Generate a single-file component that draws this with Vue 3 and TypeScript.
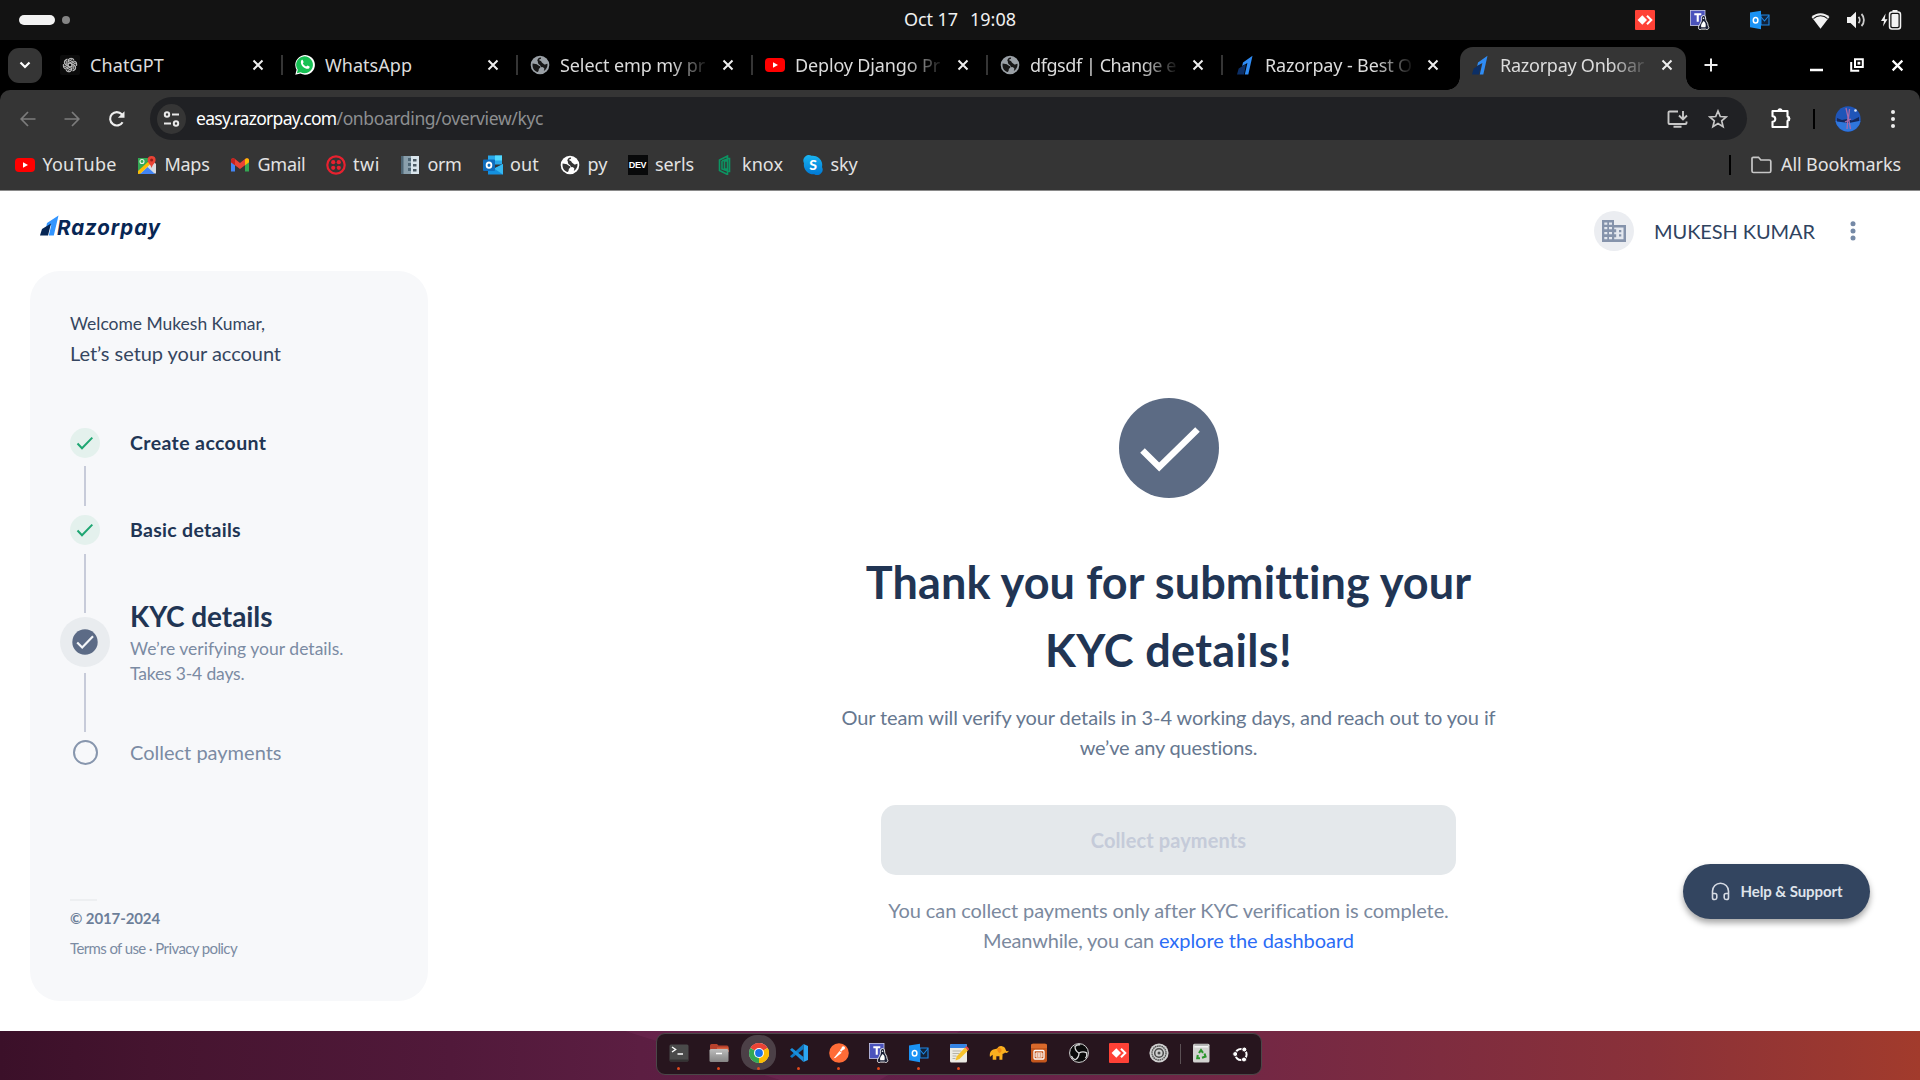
<script setup lang="ts">
interface Tab { title: string; icon: string; width: number; fade?: boolean; active?: boolean }
interface Bookmark { label: string; icon: string; width: number; gap: number; mark?: string }

// Spreads a label's letters so that it takes exactly the given width.
const vFit = {
  mounted(el: HTMLElement, binding: { value: number }) {
    const natural = el.getBoundingClientRect().width
    const count = (el.textContent ?? '').trim().length
    if (count > 0) el.style.letterSpacing = `${((binding.value - natural) / count).toFixed(3)}px`
  },
}

const tabs: Tab[] = [
  { title: 'ChatGPT', icon: 'gpt', width: 74 },
  { title: 'WhatsApp', icon: 'whatsapp', width: 87 },
  { title: 'Select emp my pr', icon: 'globe-grey', width: 145, fade: true },
  { title: 'Deploy Django Pr', icon: 'youtube', width: 145, fade: true },
  { title: 'dfgsdf | Change e', icon: 'globe-grey', width: 146, fade: true },
  { title: 'Razorpay - Best O', icon: 'razor', width: 147, fade: true },
  { title: 'Razorpay Onboar', icon: 'razor', width: 144, fade: true, active: true },
]

const bookmarks: Bookmark[] = [
  { label: 'YouTube', icon: 'youtube', width: 74, gap: 20.5 },
  { label: 'Maps', icon: 'maps', width: 45, gap: 20.5 },
  { label: 'Gmail', icon: 'gmail', width: 48, gap: 20 },
  { label: 'twi', icon: 'twilio', width: 27, gap: 20 },
  { label: 'orm', icon: 'orm', width: 34, gap: 21 },
  { label: 'out', icon: 'outlook-web', width: 29, gap: 21 },
  { label: 'py', icon: 'globe-white', width: 20, gap: 20 },
  { label: 'serls', icon: 'dev', width: 39, gap: 20.5, mark: 'DEV' },
  { label: 'knox', icon: 'knox', width: 41, gap: 20, mark: '' },
  { label: 'sky', icon: 'skype', width: 27, gap: 0, mark: 'S' },
]

const dock = [
  { icon: 'terminal', open: true },
  { icon: 'files', open: true },
  { icon: 'chrome', open: true, focused: true },
  { icon: 'vscode', open: true },
  { icon: 'postman', open: true },
  { icon: 'teams', open: true },
  { icon: 'outlook', open: true },
  { icon: 'notes', open: true },
  { icon: 'elephant' },
  { icon: 'impress' },
  { icon: 'obs' },
  { icon: 'anydesk' },
  { icon: 'settings' },
] as { icon: string; open?: boolean; focused?: boolean }[]
</script>

<template>
  <div class="desktop">
    <svg class="defs" width="0" height="0">
      <linearGradient id="g-skype" x1="0" y1="0" x2="0" y2="1"><stop offset="0" stop-color="#19b5f1" /><stop offset="1" stop-color="#0078d4" /></linearGradient>
      <linearGradient id="g-file" x1="0" y1="0" x2="0" y2="1"><stop offset="0" stop-color="#bdbdbd" /><stop offset="1" stop-color="#858585" /></linearGradient>
      <symbol id="i-gpt" viewBox="0 0 20 20">
        <rect width="20" height="20" rx="2" fill="#0b0b0b" />
        <g fill="none" stroke="#bdbdbd" stroke-width="1.1">
          <path v-for="n in 6" :key="n" d="M10 12.300L8 11V6.400A3 3 0 0 1 12.600 3.800L14 4.800M8 6.800l4-2.300" :transform="`rotate(${n * 60} 10 10)`" />
        </g>
      </symbol>
      <symbol id="i-whatsapp" viewBox="0 0 20 20">
        <path d="M0.3 19.8l1.3-5A9.8 9.8 0 1 1 5.4 18.5z" fill="#fff" />
        <path d="M1.9 18.2l.9-3.4A8.4 8.4 0 1 1 5.6 17.2z" fill="#16c053" />
        <path d="M6.6 5.1c.4-.4 1-.4 1.2.1l.8 1.8c.1.4-.8 1.3-.7 1.6.7 1.4 1.8 2.3 3.2 2.9.4.1 1.1-1.2 1.5-1l1.9.9c.4.3 0 1.6-.6 2-1.500.9-3.800.2-5.700-1.400C6.300 10.400 5 7.100 6.600 5.100z" fill="#fff" />
      </symbol>
      <symbol id="i-globe-grey" viewBox="0 0 20 20"><circle cx="10" cy="10" r="9.300" fill="#9aa0a6" /><path d="M2.600 8.500c2 .2 4.200.4 5.200 1.600.9 1.100 2.500.6 2.600 2 .1 1.200-1.800 1.400-1.700 2.700.1 1.200-.5 2.300-1.300 2.300C4 16 2 12.500 2.600 8.500zM10.500 2.400c1.300.2.400 1.600-.8 1.900-.9.200-.5 1.500.5 1.500 1.300 0 1 1.600 2.200 2.100 1.300.5 1.500 1.800 2.900 1.600 1-.1 1.700-1 2.200-.5.200 3-1.200 5.600-3.700 7 .5-1.600.9-2.600-.1-3.200-1.300-.7-2.800-.2-3.200-1.700-.3-1.300-1.700-1.600-2.300-2.600-.5-.9 0-2.400-1-3C8 3.500 9 2.300 10.500 2.400z" fill="#171717" /></symbol>
      <symbol id="i-globe-white" viewBox="0 0 20 20"><circle cx="10" cy="10" r="9.300" fill="#fff" /><path d="M2.600 8.500c2 .2 4.200.4 5.200 1.600.9 1.100 2.500.6 2.600 2 .1 1.200-1.800 1.400-1.700 2.700.1 1.200-.5 2.300-1.300 2.300C4 16 2 12.500 2.600 8.500zM10.500 2.400c1.300.2.400 1.600-.8 1.900-.9.200-.5 1.500.5 1.500 1.300 0 1 1.600 2.200 2.100 1.300.5 1.500 1.800 2.900 1.600 1-.1 1.700-1 2.200-.5.200 3-1.200 5.600-3.700 7 .5-1.600.9-2.600-.1-3.200-1.300-.7-2.800-.2-3.200-1.700-.3-1.300-1.700-1.600-2.300-2.600-.5-.9 0-2.400-1-3C8 3.500 9 2.300 10.500 2.400z" fill="#353535" /></symbol>
      <symbol id="i-youtube" viewBox="0 0 20 20"><rect y="3" width="20" height="14" rx="4" fill="#f00" /><path d="M8 7.200v5.600l5-2.800z" fill="#fff" /></symbol>
      <symbol id="i-razor" viewBox="0 0 20 20"><path d="M8 7.500L17.500.8 13.300 19.500H9.800l2.600-11.500L7.200 11z" fill="#2f8cf5" /><path d="M2 19.500l1.700-6L11 9 9 19.500z" fill="#0c2f66" /></symbol>
      <symbol id="i-maps" viewBox="0 0 20 20">
        <path d="M1 3h11l-3 9-8 7z" fill="#34a853" /><path d="M1 18.500L15 5l4 4v9.500z" fill="#dadce0" /><path d="M3 19l7.500-7L18 19z" fill="#4285f4" /><path d="M1 16l12-11 2 2.500L3.500 18.500 1 19z" fill="#fbbc04" /><circle cx="5" cy="6.500" r="2" fill="none" stroke="#e8f5e9" stroke-width="1.100" />
        <path d="M14.600 1a4 4 0 0 1 4 4c0 3-3 4.200-4 8-1-3.800-4-5-4-8a4 4 0 0 1 4-4z" fill="#ea4335" /><circle cx="14.600" cy="5" r="1.500" fill="#961d17" />
      </symbol>
      <symbol id="i-gmail" viewBox="0 0 20 20"><path d="M1 5v11.500h4V9z" fill="#4285f4" /><path d="M19 5v11.500h-4V9z" fill="#34a853" /><path d="M1 5.500C1 3 3.500 2.500 5 4l5 4 5-4c1.500-1.500 4-1 4 1.500v1.700l-9 6.800-9-6.800z" fill="#ea4335" /><path d="M15 4.300c1.500-1.700 4-1.300 4 1.200v1.700l-4 3z" fill="#fbbc04" /><path d="M1 5.500C1 3.200 3.300 2.600 5 4v6.200L1 7.200z" fill="#c5221f" /></symbol>
      <symbol id="i-twilio" viewBox="0 0 20 20"><circle cx="10" cy="10" r="8.700" fill="none" stroke="#e8212f" stroke-width="2.200" /><g fill="#e8212f"><circle cx="7.200" cy="7.200" r="2.100" /><circle cx="12.800" cy="7.200" r="2.100" /><circle cx="7.200" cy="12.800" r="2.100" /><circle cx="12.800" cy="12.800" r="2.100" /></g></symbol>
      <symbol id="i-orm" viewBox="0 0 20 20"><rect x="1" y="1" width="10" height="18" fill="#8aa0ad" /><path d="M1 1h2.500v18H1zM8 3h3v3H8zM8 8h3v3H8zM8 13h3v3H8z" fill="#4e6675" /><rect x="11" y="1" width="8" height="18" fill="#d9e5ec" /><path d="M13 4h3.500v2.500H13zM13 9h3.500v2.500H13zM13 14h3.500v2.500H13z" fill="#4b5a64" /></symbol>
      <symbol id="i-outlook-web" viewBox="0 0 20 20"><path d="M5 .500h14v9H5z" fill="#28a8ea" /><path d="M12 .500h7v5h-7z" fill="#50d9ff" /><path d="M5 5h7v6H5z" fill="#0364b8" /><path d="M5 9l7.500 4L20 9v10.500H5z" fill="#1490df" /><path d="M20 9v10.500l-9-6z" fill="#35b8f1" /><rect y="4.500" width="12" height="11.500" rx="1" fill="#0f6cbd" /><ellipse cx="6" cy="10.200" rx="2.400" ry="2.700" fill="none" stroke="#fff" stroke-width="1.800" /></symbol>
      <symbol id="i-dev" viewBox="0 0 20 20"><rect width="20" height="20" fill="#08090a" /></symbol>
      <symbol id="i-knox" viewBox="0 0 20 20"><path d="M4.500 5v10.500l8 4V1zM7 6v8l5.500 2M12.500 3.500h2v13h-2M9.500 6h3v8h-3zM7 6l5.500-2" fill="none" stroke="#0c9462" stroke-width="1.600" /></symbol>
      <symbol id="i-skype" viewBox="0 0 20 20"><path d="M5.500 0a5.500 5.500 0 0 1 3 .8A9.300 9.300 0 0 1 19 12a5.500 5.500 0 0 1-7.800 7.200A9.300 9.300 0 0 1 1 8.300 5.600 5.600 0 0 1 5.500 0z" fill="url(#g-skype)" /></symbol>

      <symbol id="i-anydesk" viewBox="0 0 20 20"><rect width="20" height="20" rx="1" fill="#ff4136" /><path d="M7.300 5.300L12 10l-4.700 4.700L2.600 10z" fill="#fff" /><path d="M12 5.800L16.300 10 12 14.200" fill="none" stroke="#fff" stroke-width="2" /></symbol>
      <symbol id="i-teams" viewBox="0 0 20 20"><rect x=".5" y=".5" width="14.500" height="15" fill="#4b53bc" stroke="#c9cbee" stroke-width=".8" /><path d="M4.300 3.200h7v2H8.800v6.500H6.700V5.200H4.300z" fill="#fff" /><path d="M13.500 5.500c2 0 2.200 2 2.200 3.800 0 1.600 2.300 3.300 2.300 6 0 1.200 1.500 2 .6 3.200-.7 1-2.200 1.300-3 .6h-4c-1 .8-3 .4-3-.5 0-1.200-.6-1.500.3-2.700.7-1.200 2.400-4 2.500-5.600 0-2-.4-4.800 2.100-4.800z" fill="#1b2036" stroke="#fff" stroke-width=".9" /><path d="M13.500 11c2 1.200 2.700 3.600 2 6.200h-4.300c-.8-2.500 1.100-4.300 2.300-6.200z" fill="#fff" /><circle cx="13.500" cy="8.200" r=".8" fill="#fff" /></symbol>
      <symbol id="i-outlook" viewBox="0 0 20 20"><path d="M11 5h8v10h-8z" fill="#12233a" stroke="#1e88e5" stroke-width="1.100" /><path d="M11 7l3.500 4L19 5.500" fill="none" stroke="#1e88e5" stroke-width="1.100" /><path d="M0 2.500L11 .8v18.400L0 17.300z" fill="#1b93f5" /><ellipse cx="5.600" cy="10.300" rx="2.300" ry="2.800" fill="none" stroke="#fff" stroke-width="1.500" /></symbol>
      <symbol id="i-terminal" viewBox="0 0 20 20"><rect x=".5" y="1.500" width="19" height="17" rx="1.500" fill="#4a4a4a" /><path d="M.5 16.500h19V17a1.500 1.500 0 0 1-1.500 1.500H2A1.500 1.500 0 0 1 .5 17z" fill="#333" /><path d="M3 4l3.600 2.500L3 9M8.500 11h5.500" fill="none" stroke="#fff" stroke-width="1.400" /></symbol>
      <symbol id="i-files" viewBox="0 0 20 20"><path d="M1 2.500A1.500 1.500 0 0 1 2.500 1h5.500l1.500 1.500H18A1.500 1.500 0 0 1 19.500 4v5H1z" fill="#b7412c" /><path d="M8 4.500h11.500V9H8z" fill="#d9603e" /><rect x=".5" y="6" width="19" height="13" rx="1.500" fill="url(#g-file)" /><path d="M7 10.500h6" stroke="#fff" stroke-width="1.500" /></symbol>
      <symbol id="i-chrome" viewBox="0 0 20 20"><circle cx="10" cy="10" r="10" fill="#fff" /><path d="M10 10L1.340 5A10 10 0 0 1 18.660 5z" fill="#ea4335" /><path d="M10 10L18.660 5A10 10 0 0 1 10 20z" fill="#fbbc04" /><path d="M10 10L10 20A10 10 0 0 1 1.340 5z" fill="#34a853" /><path d="M10 5h8.660L14.300 12.500 10 20A10 10 0 0 0 18.660 5z" fill="#fbbc04" /><circle cx="10" cy="10" r="5" fill="#fff" /><circle cx="10" cy="10" r="3.900" fill="#1a73e8" /></symbol>
      <symbol id="i-vscode" viewBox="0 0 20 20"><path d="M14.500 1L19 3v14l-4.500 2z" fill="#2ba6f2" /><path d="M14.500 1v5L3 15l-2-1.800z" fill="#0d79c4" /><path d="M1 6.800L3 5l11.500 9v5z" fill="#1a8fdc" /></symbol>
      <symbol id="i-postman" viewBox="0 0 20 20"><circle cx="10" cy="10" r="9.800" fill="#ff6c37" /><path d="M4.500 15.500l6-7.500 2.200 1.800-5.500 4.500z" fill="#fff" /><path d="M11.500 8l2.500-2.700" stroke="#fff" stroke-width="2" /><circle cx="14.300" cy="5" r="1.700" fill="#fff" /></symbol>
      <symbol id="i-notes" viewBox="0 0 20 20"><rect x="1" y="1" width="17" height="18.500" rx="1.500" fill="#ecebe4" /><path d="M1 5V2.500A1.500 1.500 0 0 1 2.500 1h14A1.500 1.500 0 0 1 18 2.500V5z" fill="#3584e4" /><path d="M3.500 8h9M3.500 10.500h7M3.500 13h4M3.500 15.500h3" stroke="#b5b3aa" stroke-width="1" /><path d="M16 4.500l3 3-8.500 8.500-4 1.500 1.300-4.300z" fill="#f6c22c" /><path d="M16 4.500l1.500-1.500 3 3L19 7.500z" fill="#e0474c" /></symbol>
      <symbol id="i-elephant" viewBox="0 0 20 20"><path d="M1 14c-.6-3 .2-6.500 3.300-7.500 1.500-.5 2.700-.4 4-1C9.500 3.500 11 2.800 13 3.200c2.400.4 3.300 2 3.800 3.800.3 1.200 1.600 1.600 2.800.8-.1 1.800-2.200 2.600-3.600 1.800-.8 1-1.800 1.300-2.500 1.400.2 1.700-.2 3.400-.1 5.800h-3v-3.600H7.300v3.600H3.700v-5c-1 .4-1.600 1.500-2.700 2.200z" fill="#fbb01f" /><path d="M8.500 5.200c1-.8 3.500-.5 4 1.500.3 1.800-.8 3-2 3.200-1.700-.8-2.700-2.600-2-4.700z" fill="#f28a10" /></symbol>
      <symbol id="i-impress" viewBox="0 0 20 20"><rect x="2" y=".8" width="16" height="18.600" rx="1.800" fill="#c4571d" /><path d="M3.800.8h12.400A1.800 1.800 0 0 1 18 2.600V5H2V2.600A1.800 1.800 0 0 1 3.800.8z" fill="#d9692b" /><rect x="5" y="7.500" width="10" height="8.500" rx="1" fill="none" stroke="#fff" stroke-width="1.300" /><path d="M7 10h6v4H7zM10 10v4M7 12h6" fill="none" stroke="#fff" stroke-width="1" /></symbol>
      <symbol id="i-obs" viewBox="0 0 20 20"><circle cx="10" cy="10" r="9.400" fill="#0a0a0a" stroke="#d7d7d7" stroke-width="1" /><g fill="none" stroke="#dcdcdc" stroke-width="1.300"><path v-for="n in 3" :key="n" d="M10 10c-.5-2.500-.2-5 2.500-7.300 2 .3 3.600 1.400 4.500 3" :transform="`rotate(${n * 120 - 50} 10 10)`" /></g></symbol>
      <symbol id="i-settings" viewBox="0 0 20 20"><circle cx="10" cy="10" r="9.600" fill="#cfcfcf" /><circle cx="10" cy="10" r="7" fill="none" stroke="#4a4a4a" stroke-width="1.300" stroke-dasharray="1.600 .6" /><circle cx="10" cy="10" r="4.300" fill="none" stroke="#4a4a4a" stroke-width="1.500" /><circle cx="10" cy="10" r="1.500" fill="#4a4a4a" /></symbol>
      <symbol id="i-trash" viewBox="0 0 20 20"><rect x="2" y=".8" width="16.500" height="18.600" rx="1.500" fill="#d3d3d1" /><path d="M3.500 1.500h13.500v3H3.500z" fill="#f4f4f4" /><path d="M3.500 2h13.500" stroke="#666" stroke-width=".8" /><g fill="none" stroke="#2c962c" stroke-width="2.100"><path d="M8 10l2-3 2 2.800" /><path d="M13.500 10.500l1 3-3.500 1.200" /><path d="M9 15.200H6.300L6.800 12" /></g></symbol>
      <symbol id="i-ubuntu" viewBox="0 0 20 20"><circle cx="10" cy="10.500" r="5.600" fill="none" stroke="#fff" stroke-width="2" /><g fill="#fff" stroke="#28161f" stroke-width="1"><circle cx="4.200" cy="10" r="2.500" /><circle cx="13.300" cy="5.500" r="2.500" /><circle cx="13" cy="15.500" r="2.500" /></g></symbol>
      <symbol id="i-close" viewBox="0 0 12 12"><path d="M1.500 1.500l9 9M10.500 1.500l-9 9" fill="none" stroke="currentColor" stroke-width="2" /></symbol>
    </svg>

    <header class="panel">
      <div class="panel-side workspaces"><span class="pill"></span><span class="dot"></span></div>
      <div class="clock"><span v-fit="54">Oct 17</span><span v-fit="46">19:08</span></div>
      <div class="panel-side tray">
        <svg class="t-any"><use href="#i-anydesk" /></svg>
        <svg class="t-teams"><use href="#i-teams" /></svg>
        <svg class="t-outlook"><use href="#i-outlook" /></svg>
        <svg class="t-wifi" viewBox="0 0 20 20"><path d="M.6 6.200a13.500 13.500 0 0 1 18.800 0L10 18.600z" fill="#f2f2f2" /><path d="M2.600 8a10.800 10.800 0 0 1 14.800 0" fill="none" stroke="#131313" stroke-width="1.100" /></svg>
        <svg class="t-sound" viewBox="0 0 20 20"><path d="M1 7h3.500L10 1.800v16.400L4.500 13H1z" fill="#f2f2f2" /><path d="M12.500 6.800c1.600 1.800 1.600 4.600 0 6.400M15.500 4c3.200 3.300 3.200 8.700 0 12" fill="none" stroke="#ccc" stroke-width="1.800" /></svg>
        <svg class="t-battery" viewBox="0 0 21 20"><path d="M4.600 3.500L0 11h3l-1 5.500 4.500-7.300H3.800z" fill="#f2f2f2" /><rect x="8.500" y="2" width="11" height="17" rx="2.500" fill="none" stroke="#f2f2f2" stroke-width="1.500" /><rect x="11.500" y="0" width="5" height="2" fill="#f2f2f2" /><rect x="10.500" y="4" width="7" height="13" rx="1" fill="#f2f2f2" /></svg>
      </div>
    </header>

    <section class="chrome">
      <div class="strip">
        <button class="search"><svg width="12" height="8" viewBox="0 0 12 8"><path d="M1.500 1.500L6 6l4.500-4.500" fill="none" stroke="#fff" stroke-width="2.200" /></svg></button>
        <div v-for="tab in tabs" :key="tab.title" class="tab" :class="{ active: tab.active }">
          <svg class="fav"><use :href="`#i-${tab.icon}`" /></svg>
          <span class="title" :class="{ fade: tab.fade }"><span v-fit="tab.width">{{ tab.title }}</span></span>
          <svg class="x"><use href="#i-close" /></svg>
        </div>
        <svg class="plus" viewBox="0 0 14 14"><path d="M7 .5v13M.5 7h13" stroke="#eee" stroke-width="2" /></svg>
        <div class="win">
          <svg width="13" height="13" viewBox="0 0 13 13"><path d="M0 11h13" stroke="#fff" stroke-width="2.500" /></svg>
          <svg width="14" height="14" viewBox="0 0 14 14"><path d="M1.200 4v8.800h8M5 1.200h7.800v7.800H5z" fill="none" stroke="#fff" stroke-width="2" /><path d="M7.500 3.800h2.800v2.800H7.500z" fill="#fff" /></svg>
          <svg width="13" height="13" viewBox="0 0 12 12"><use href="#i-close" /></svg>
        </div>
      </div>

      <div class="toolbar">
        <div class="nav">
          <svg width="16" height="16" viewBox="0 0 16 16"><path d="M15.500 8H1.500M8 1L1.200 8 8 15" fill="none" stroke="#7c7c7c" stroke-width="1.700" /></svg>
          <svg width="16" height="16" viewBox="0 0 16 16"><path d="M.5 8h14M8 1l6.800 7L8 15" fill="none" stroke="#7c7c7c" stroke-width="1.700" /></svg>
          <svg width="18" height="18" viewBox="0 0 18 18"><path d="M14.600 12.200A6.700 6.700 0 1 1 13.800 4.300L15.500 6" fill="none" stroke="#eee" stroke-width="2.100" /><path d="M16.500 1.200v6.600h-6.600z" fill="#eee" /></svg>
        </div>
        <div class="omnibox">
          <span class="site"><svg width="17" height="16" viewBox="0 0 17 16"><g fill="none" stroke="#e8e8e8" stroke-width="2"><circle cx="4" cy="3.500" r="2.200" /><path d="M9 3.500h7M1 12.500h7" /><circle cx="13" cy="12.500" r="2.200" /></g></svg></span>
          <span class="url"><span v-fit="140.500" class="host">easy.razorpay.com</span><span v-fit="206.500">/onboarding/overview/kyc</span></span>
          <svg class="install" viewBox="0 0 21 19"><path d="M11 1.500H2.500A1 1 0 0 0 1.500 2.500v10.500a1 1 0 0 0 1 1h16a1 1 0 0 0 1-1v-1.500M6.500 16.800h8M16 1v8M12 5.500l4 4 4-4" fill="none" stroke="#c7c7c7" stroke-width="1.900" /></svg>
          <svg class="star" viewBox="0 0 20 20"><path d="M10 2l2.300 5.500 5.900.5-4.500 3.900 1.400 5.800L10 14.600l-5.100 3.100 1.400-5.800L1.800 8l5.900-.5z" fill="none" stroke="#c7c7c7" stroke-width="1.700" /></svg>
        </div>
        <svg class="puzzle" viewBox="0 0 20 22"><path d="M1.500 4h15v5.500a2.300 2.300 0 0 1 0 4.500v6h-15v-5.200a2.800 2.800 0 0 0 0-5.600z" fill="none" stroke="#fff" stroke-width="2.100" stroke-linejoin="round" /><path d="M6.500 4a2.500 2.700 0 0 1 5 0zM16.500 9.300a2.700 2.500 0 0 1 0 5z" fill="#fff" /></svg>
        <span class="bar"></span>
        <svg class="avatar" viewBox="0 0 26 26"><circle cx="13" cy="13" r="12.700" fill="#1f55b8" /><path d="M.5 15h25a12.700 12.700 0 0 1-25 0z" fill="#2f76dc" /><path d="M2 12l5 2 5-1 5 1.500 7-3.500v4L14 17 2 15.500z" fill="#14285c" /><path d="M11 2l2 9-1 12M14.500 3l-1 9 2 11M10 16l6-3" fill="none" stroke="#a86aa9" stroke-width="1.300" /><circle cx="20.500" cy="4.500" r="1.300" fill="#dfe9f8" /></svg>
        <svg class="menu" viewBox="0 0 4 20"><g fill="#eee"><circle cx="2" cy="3" r="2" /><circle cx="2" cy="10" r="2" /><circle cx="2" cy="17" r="2" /></g></svg>
      </div>

      <div class="bookmarks">
        <div v-for="b in bookmarks" :key="b.label" class="bookmark" :style="{ marginRight: `${b.gap}px` }">
          <span class="mark" :class="b.icon"><svg><use :href="`#i-${b.icon}`" /></svg><b v-if="b.mark">{{ b.mark }}</b></span>
          <span v-fit="b.width">{{ b.label }}</span>
        </div>
        <span class="bar push"></span>
        <svg class="folder" viewBox="0 0 21 18"><path d="M1 15V2.500A1.200 1.200 0 0 1 2.200 1.300h5.300L9.800 4h8.500a1.500 1.500 0 0 1 1.500 1.500V15a1.500 1.500 0 0 1-1.500 1.500H2.500A1.500 1.500 0 0 1 1 15z" fill="none" stroke="#c7c7c7" stroke-width="1.700" /></svg>
        <span v-fit="120">All Bookmarks</span>
      </div>
    </section>

    <main class="page">
      <div class="page-head">
        <div class="logo">
          <svg width="20" height="22" viewBox="0 0 20 22"><path d="M7 8L18.500.5 13.800 20.500H8.800L11.300 10 6 13z" fill="#3395ff" /><path d="M0 20.500l2-6.500 9-5.500L8 20.500z" fill="#072654" /></svg>
          <span v-fit="104">Razorpay</span>
        </div>
        <div class="account">
          <span class="org"><svg width="24" height="22" viewBox="0 0 24 22"><path d="M0 0h12v5h12v17H0z" fill="#8593ab" /><path d="M2.300 2.500h3v2.200h-3zM7 2.500h3v2.200H7zM2.300 7h3v2.200h-3zM7 7h3v2.200H7zM2.300 12h3v2.200h-3zM7 12h3v2.200H7zM2.300 17h3v2.200h-3zM7 17h3v2.200H7z" fill="#e4e8ef" /><path d="M12.200 7.500h9.300v11.800h-9.300v-2h2v-3h-2v-2h2v-3h-2zM17 10v2.300h2.300V10zM17 14.300v2.300h2.300v-2.300z" fill="#e4e8ef" fill-rule="evenodd" /></svg></span>
          <span v-fit="161" class="name">MUKESH KUMAR</span>
          <svg width="6" height="20" viewBox="0 0 6 20"><g fill="#7589a6"><circle cx="3" cy="2.700" r="2.500" /><circle cx="3" cy="9.900" r="2.500" /><circle cx="3" cy="17.100" r="2.500" /></g></svg>
        </div>
      </div>

      <div class="body">
        <aside class="side">
          <p class="hello"><span v-fit="195">Welcome Mukesh Kumar,</span></p>
          <p class="lets"><span v-fit="211">Let’s setup your account</span></p>

          <div class="steps">
            <div class="step s1">
              <div class="rail"><span class="done"><svg width="18" height="14" viewBox="0 0 18 14"><path d="M1.500 7.500l4.500 4.700L16.300 1.600" fill="none" stroke="#1ea672" stroke-width="2" /></svg></span><i></i></div>
              <b v-fit="136.500">Create account</b>
            </div>
            <div class="step s2">
              <div class="rail"><span class="done"><svg width="18" height="14" viewBox="0 0 18 14"><path d="M1.500 7.500l4.500 4.700L16.300 1.600" fill="none" stroke="#1ea672" stroke-width="2" /></svg></span><i></i></div>
              <b v-fit="111">Basic details</b>
            </div>
            <div class="step s3">
              <div class="rail"><span class="current"><svg width="26" height="26" viewBox="0 0 26 26"><circle cx="13" cy="13" r="12.700" fill="#5c6b86" /><path d="M5.200 13.500l5 5L21 7.300" fill="none" stroke="#f4f6f9" stroke-width="2.200" /></svg></span><i></i></div>
              <div class="kyc">
                <h3><span v-fit="142.500">KYC details</span></h3>
                <p><span v-fit="213.500">We’re verifying your details.</span></p>
                <p><span v-fit="114.500">Takes 3-4 days.</span></p>
              </div>
            </div>
            <div class="step s4">
              <div class="rail"><span class="todo"></span></div>
              <span v-fit="151.500" class="muted">Collect payments</span>
            </div>
          </div>

          <div class="foot">
            <hr>
            <p><b v-fit="90">© 2017-2024</b></p>
            <p class="legal"><span v-fit="167">Terms of use · Privacy policy</span></p>
          </div>
        </aside>

        <section class="content">
          <svg class="big" viewBox="0 0 100 100"><circle cx="50" cy="50" r="50" fill="#5c6b84" /><path d="M23.500 52.500L40.200 69 78.500 31.500" fill="none" stroke="#fff" stroke-width="6.500" /></svg>
          <h1><span v-fit="604">Thank you for submitting your</span><br><span v-fit="247">KYC details!</span></h1>
          <p class="lead"><span v-fit="654">Our team will verify your details in 3-4 working days, and reach out to you if</span><br><span v-fit="178">we’ve any questions.</span></p>
          <button class="collect" disabled><span v-fit="155.500">Collect payments</span></button>
          <p class="note"><span v-fit="560">You can collect payments only after KYC verification is complete.</span><br><span v-fit="176" class="pre">Meanwhile, you can </span><a v-fit="195">explore the dashboard</a></p>
        </section>
      </div>

      <button class="help">
        <svg width="19" height="19" viewBox="0 0 19 19"><path d="M1.500 13V9.200a8 8 0 0 1 16 0V13M1.500 11.500H4a1.800 1.800 0 0 1 1.800 1.800v2.500A1.800 1.800 0 0 1 4 17.500H3.300a1.800 1.800 0 0 1-1.800-1.800zM17.500 11.500H15a1.800 1.800 0 0 0-1.800 1.800v2.500a1.800 1.800 0 0 0 1.800 1.700h.7a1.800 1.800 0 0 0 1.800-1.800z" fill="none" stroke="#d5dae3" stroke-width="1.600" /></svg>
        <span v-fit="102">Help &amp; Support</span>
      </button>
    </main>

    <footer class="wall">
      <svg class="facets" viewBox="0 0 1920 49" preserveAspectRatio="none"><path d="M625 0H960L880 49H780z" fill="#e060b0" opacity=".08" /></svg>
      <nav class="dock">
        <div v-for="d in dock" :key="d.icon" class="app" :class="{ open: d.open, focused: d.focused }"><svg><use :href="`#i-${d.icon}`" /></svg></div>
        <span class="sep"></span>
        <div class="app"><svg><use href="#i-trash" /></svg></div>
        <div class="app last"><svg><use href="#i-ubuntu" /></svg></div>
      </nav>
    </footer>
  </div>
</template>

<style>
html, body { margin: 0; background: #131313; overflow: hidden; }
</style>

<style scoped>
* { box-sizing: border-box; }
p, h1, h3, hr { margin: 0; }
button { border: 0; padding: 0; font: inherit; }
svg { display: block; flex: none; }
.defs { position: absolute; }
.desktop { width: 1920px; height: 1080px; display: flex; flex-direction: column; overflow: hidden; font-family: "Noto Sans", "Open Sans", sans-serif; white-space: nowrap; }
h1 span, p span, p b, p a, h3 span, .url span { display: inline-block; }

.panel { height: 40px; background: #131313; display: flex; align-items: center; justify-content: space-between; }
.panel-side { width: 800px; display: flex; align-items: center; }
.workspaces { padding-left: 19px; gap: 7px; }
.pill { width: 36px; height: 10px; border-radius: 5px; background: #f2f2f2; }
.dot { width: 8px; height: 8px; border-radius: 50%; background: #858585; }
.clock { display: flex; gap: 12px; font-size: 18px; color: #f0f0f0; line-height: 24px; margin-bottom: 2px; }
.tray { justify-content: flex-end; padding-right: 18.500px; }
.tray svg { width: 20px; height: 20px; }
.t-teams { margin-left: 35px; }
.t-outlook { margin-left: 40px; }
.tray .t-wifi { margin-left: 40.500px; width: 19px; height: 19px; }
.tray .t-sound { margin-left: 16px; }
.tray .t-battery { margin-left: 15px; width: 21px; }

.chrome { height: 151px; background: #000; }
.strip { height: 50px; display: flex; align-items: center; padding-left: 8px; }
.search { width: 34px; height: 35px; margin-right: 4.500px; border-radius: 11px; background: #353535; display: flex; align-items: center; justify-content: center; }
.tab { width: 235px; height: 50px; display: flex; align-items: center; padding-left: 13.500px; color: #dcdcdc; position: relative; font-size: 18px; }
.tab:not(.active)::after { content: ""; position: absolute; right: -1px; top: 15px; width: 2px; height: 20px; background: #353535; }
.tab:nth-child(7)::after { display: none; }
.fav { width: 20px; height: 20px; }
.title { width: 150px; margin-left: 10px; line-height: 24px; padding-bottom: 1px; overflow: hidden; }
.title > span { display: inline-block; }
.fade { mask-image: linear-gradient(90deg, #000 74%, transparent 100%); }
.x { width: 12px; height: 12px; margin-left: 11.500px; color: #eee; }
.tab.active { width: 226px; margin-left: 3.500px; padding-left: 10px; height: 43px; align-self: flex-end; padding-bottom: 7px; background: #353535; border-radius: 13px 13px 0 0; }
.tab.active .x { margin-left: 10.500px; }
.tab.active::before, .tab.active::after { content: ""; position: absolute; bottom: 0; width: 13px; height: 13px; }
.tab.active::before { left: -13px; background: radial-gradient(circle at 0 0, transparent 12.500px, #353535 13px); }
.tab.active::after { right: -13px; background: radial-gradient(circle at 100% 0, transparent 12.500px, #353535 13px); }
.plus { width: 14px; height: 14px; margin-left: 17.500px; }
.win { margin-left: auto; padding-right: 16.500px; display: flex; align-items: center; gap: 27px; color: #fff; }

.toolbar { height: 57px; background: #353535; border-radius: 10px 10px 0 0; display: flex; align-items: center; padding-left: 20px; }
.nav { display: flex; align-items: center; gap: 28px; width: 130px; }
.omnibox { width: 1597px; height: 43px; border-radius: 22px; background: #202124; display: flex; align-items: center; padding-left: 7px; }
.site { width: 29px; height: 30px; border-radius: 50%; background: #353535; display: flex; align-items: center; justify-content: center; }
.url { margin-left: 10px; font-size: 17.500px; line-height: 24px; color: #8d8f91; flex: 1; padding-bottom: 1px; }
.host { color: #fff; }
.install { width: 21px; height: 19px; margin-right: 20px; margin-top: 1px; }
.star { width: 20px; height: 20px; margin-right: 19.500px; }
.puzzle { width: 20px; height: 22px; margin-left: 24px; margin-top: -2px; }
.bar { width: 2px; height: 20px; background: #000; margin-left: 22px; }
.avatar { width: 26px; height: 26px; margin-left: 19.500px; }
.menu { width: 4px; height: 20px; margin-left: 30px; }

.bookmarks { height: 44px; background: #353535; border-bottom: 1px solid #8a8a8a; display: flex; align-items: flex-start; padding: 6px 19px 0 15px; color: #e3e3e3; font-size: 18px; line-height: 23px; }
.bookmark { display: flex; gap: 7.500px; }
.mark { position: relative; width: 20px; height: 20px; margin-top: 2px; }
.mark svg { width: 20px; height: 20px; }
.mark b { position: absolute; left: 0; top: 0; width: 20px; text-align: center; line-height: 20px; color: #fff; }
.mark.dev b { font: 700 9px/20px "Liberation Sans Narrow", "Liberation Sans", sans-serif; letter-spacing: -.300px; }
.mark.skype b { font: 900 14px/20px Lato, sans-serif; }
.bar.push { margin-left: auto; margin-top: 2px; margin-right: 20px; }
.folder { width: 21px; height: 18px; margin: 3px 9px 0 0; }

.page { height: 840px; background: #fff; font-family: Lato, sans-serif; position: relative; }
.page-head { height: 80px; display: flex; justify-content: space-between; padding: 20px 64px 0 40px; }
.logo { display: flex; height: 30px; padding-top: 4px; color: #072654; }
.logo span { font-family: Inter, sans-serif; font-weight: 700; font-style: italic; font-size: 20.500px; line-height: 26px; margin: 0 0 0 -3px; }
.account { display: flex; align-items: center; height: 40px; }
.org { width: 40px; height: 40px; border-radius: 50%; background: #ebedf1; display: flex; align-items: center; justify-content: center; }
.name { font-size: 20px; color: #2f435f; margin: 0 35px 0 20px; }

.body { display: flex; padding-left: 30px; }
.side { width: 397.500px; height: 730px; border-radius: 30px; background: #f7f8fa; padding: 39px 0 0 40px; color: #354660; display: flex; flex-direction: column; }
.hello { font-size: 17.500px; line-height: 28px; }
.lets { font-size: 20px; line-height: 30px; }
.steps { margin: 59.500px 0 0 -10px; font-size: 20px; }
.step { display: flex; color: #213554; line-height: 30px; }
.step > b { font-size: 19.500px; line-height: 29px; }
.rail { width: 50px; margin-right: 20px; display: flex; flex-direction: column; align-items: center; }
.rail i { width: 1.500px; background: #c7cbd9; }
.done { width: 30px; height: 30px; border-radius: 50%; background: #e4f1ed; display: flex; align-items: center; justify-content: center; }
.s1 { height: 87.500px; }
.s1 i { height: 40px; margin-top: 8.500px; }
.s2 { height: 102px; }
.s2 i { height: 59px; margin-top: 8.500px; }
.s3 { height: 123px; }
.s3 i { height: 59px; margin-top: 5.500px; }
.current { width: 50px; height: 50px; border-radius: 50%; background: #e9ecef; display: flex; align-items: center; justify-content: center; }
.kyc { margin-top: -18px; }
.kyc h3 { font-size: 28px; line-height: 34px; margin-bottom: 3px; }
.kyc p { font-size: 17.500px; line-height: 25px; color: #7b8ba3; }
.todo { width: 25px; height: 25px; border: 2px solid #8796ad; border-radius: 50%; }
.s4 .muted { line-height: 25px; color: #7b8ba3; }
.foot { margin-top: auto; height: 102px; font-size: 15px; color: #6d7f99; }
.foot hr { width: 27px; height: 2px; border: 0; background: #edeff1; }
.foot p { line-height: 20px; margin-top: 7px; }
.foot .legal { margin-top: 10px; color: #7b8ba3; }

.content { width: 720px; margin: 126.500px 0 0 381px; display: flex; flex-direction: column; align-items: center; text-align: center; color: #66778f; font-size: 20px; }
.big { width: 100px; height: 100px; }
h1 { margin-top: 51.500px; font-size: 45px; line-height: 67.500px; color: #213554; }
.lead { margin-top: 18px; line-height: 30px; }
.collect { width: 575px; height: 70px; border-radius: 15px; margin-top: 43px; background: #e4e8eb; color: #c5cbd9; font: 700 20px/30px Lato, sans-serif; }
.note { margin-top: 19.500px; line-height: 30px; color: #7b899e; }
.pre { white-space: pre; }
.note a { color: #2b6cf6; }
.help { position: absolute; right: 50px; top: 672.500px; width: 187.500px; height: 55px; border-radius: 28px; background: #334560; color: #dfe3ea; font: 700 15px/20px Lato, sans-serif; display: flex; align-items: center; padding-left: 28px; gap: 11px; box-shadow: 0 4px 6px rgba(0, 0, 0, .35); }

.wall { height: 49px; position: relative; display: flex; justify-content: center; padding: 2px 2px 0 0; background: linear-gradient(90deg, #3b1029 0, #45142f 150px, #51193a 450px, #5c1e42 640px, #64204a 950px, #722745 1230px, #8a3139 1650px, #a23b2c 1920px); }
.facets { position: absolute; left: 0; top: 0; width: 1920px; height: 49px; }
.dock { position: relative; width: 606px; height: 42px; border: 1px solid #4b4748; border-radius: 9px; background: #27151e; display: flex; align-items: center; padding-left: 1.500px; }
.app { width: 40px; height: 40px; display: flex; align-items: center; justify-content: center; position: relative; }
.app svg { width: 20px; height: 20px; position: relative; margin-top: -3px; }
.app.last svg { margin-top: 0; }
.app.focused::before { content: ""; position: absolute; left: 2.500px; top: .500px; width: 35px; height: 35px; border-radius: 16px; background: #4c4047; }
.app.open::after { content: ""; position: absolute; left: 18.500px; bottom: 4px; width: 3px; height: 3px; border-radius: 50%; background: #e0491d; }
.sep { width: 1px; height: 20px; background: #5b5054; margin: 0 0 0 1.500px; }
</style>
